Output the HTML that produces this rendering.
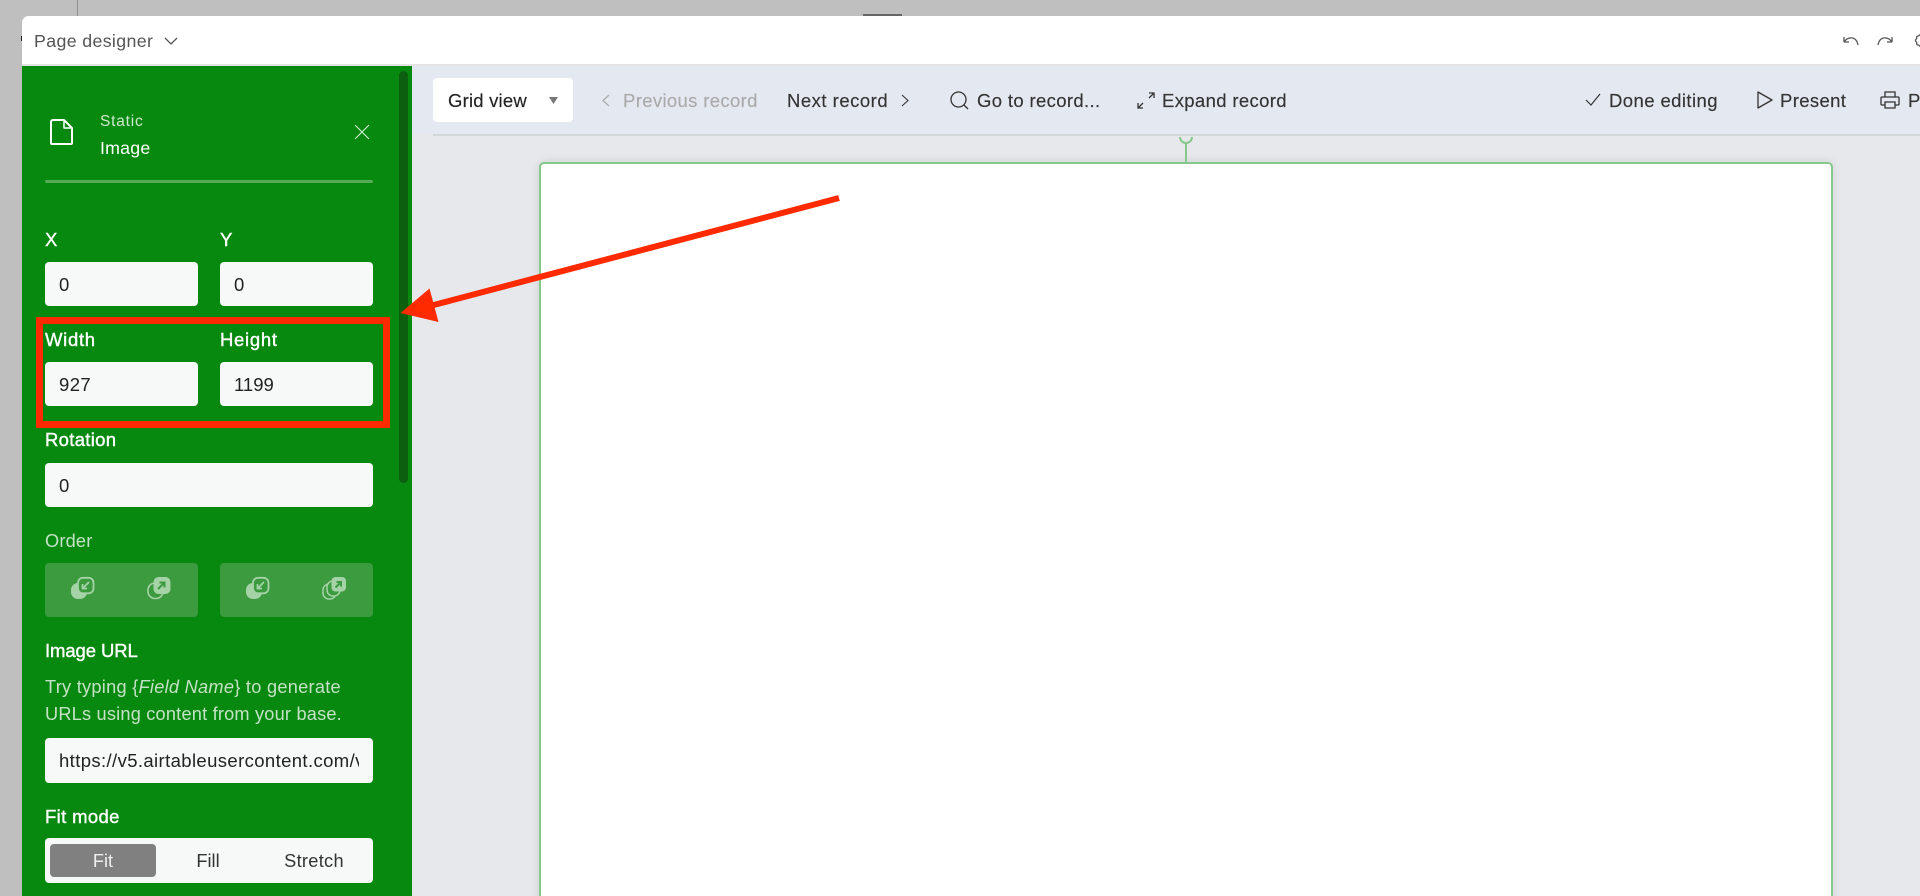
<!DOCTYPE html>
<html><head><meta charset="utf-8">
<style>
html,body{margin:0;padding:0;width:1920px;height:896px;overflow:hidden;background:#bfbfbf;font-family:"Liberation Sans",sans-serif}
#root{position:relative;width:1920px;height:896px;overflow:hidden;background:#bfbfbf}
.a{position:absolute}
.t{position:absolute;white-space:nowrap;line-height:24px;height:24px;font-size:18px}
.lb{color:#fff;-webkit-text-stroke:.4px #fff;font-size:18.500px;letter-spacing:.2px}
.in{position:absolute;background:#f7f8f8;border-radius:4px;height:44.500px;color:#222;font-size:18.500px;line-height:45px;text-indent:14px;overflow:hidden;white-space:nowrap}
.bar{color:#333;font-size:18.500px;letter-spacing:.35px;-webkit-text-stroke:.15px currentColor}
.h{color:#c4e2c6;font-size:18.200px;letter-spacing:.2px}
svg{position:absolute;overflow:visible}
</style></head><body><div id="root">
<div class="a" style="left:77px;top:0;width:1px;height:16px;background:#8f8f8f"></div>
<div class="a" style="left:863px;top:14px;width:39px;height:2px;background:#666"></div>
<div class="a" style="left:21px;top:36px;width:2px;height:5px;background:#222"></div>
<div class="a" style="left:22px;top:16px;width:1898px;height:880px;background:#e6e8ec;border-radius:7px 0 0 0"></div>
<div class="a" style="left:22px;top:16px;width:1898px;height:48px;background:#fff;border-radius:7px 0 0 0"></div>
<div class="a" style="left:22px;top:64px;width:1898px;height:2px;background:#e4e4e4"></div>
<div class="t" style="left:34px;top:29px;color:#555;font-size:17.800px;letter-spacing:.35px">Page designer</div>
<svg style="left:164px;top:36px" width="14" height="10" fill="none" stroke="#555" stroke-width="1.300"><path d="M1 2l6 6 6-6"/></svg>
<svg style="left:1843px;top:35px" width="16" height="11" fill="none" stroke="#555" stroke-width="1.300"><path d="M1 7V2M1 7H6M1 7C4 2 13 0 15 10"/></svg>
<svg style="left:1877px;top:35px" width="16" height="11" fill="none" stroke="#555" stroke-width="1.300"><path d="M15 7V2M15 7H10M15 7C12 2 3 0 1 10"/></svg>
<svg style="left:1915px;top:33px" width="10" height="15" fill="none" stroke="#555" stroke-width="1.300"><path d="M7 1C5 0 5 3 3 3C1 3 2 5 1.500 6C0 7 0 8 1.500 9C2 10 1 12 3 12C5 12 5 15 7 14"/></svg>

<!-- toolbar -->
<div class="a" style="left:412px;top:66px;width:1508px;height:68px;background:#e4e8f1"></div>
<div class="a" style="left:433px;top:134px;width:1487px;height:2px;background:#d3d7d9"></div>
<div class="a" style="left:433px;top:78px;width:140px;height:44px;background:#fff;border-radius:4px"></div>
<div class="t bar" style="left:448px;top:89px;color:#222;letter-spacing:.2px">Grid view</div>
<svg style="left:549px;top:97px" width="9" height="7"><path d="M0 0h9L4.500 7z" fill="#777"/></svg>
<svg style="left:602px;top:94px" width="8" height="13" fill="none" stroke="#aaa" stroke-width="1.200"><path d="M7 1L1 6.500 7 12"/></svg>
<div class="t bar" style="left:623px;top:89px;color:#aaa">Previous record</div>
<div class="t bar" style="left:787px;top:89px;letter-spacing:.5px">Next record</div>
<svg style="left:901px;top:94px" width="8" height="13" fill="none" stroke="#333" stroke-width="1.100"><path d="M1 1l6 5.500L1 12"/></svg>
<svg style="left:950px;top:91px" width="19" height="19" fill="none" stroke="#333" stroke-width="1.300"><circle cx="8.500" cy="8.500" r="7.500"/><path d="M14 14l4 4"/></svg>
<div class="t bar" style="left:977px;top:89px;">Go to record...</div>
<svg style="left:1137px;top:92px" width="18" height="17" fill="none" stroke="#333" stroke-width="1.300"><path d="M1 16l5-5M1 11v5h5M17 1l-5 5M12 1h5v5"/></svg>
<div class="t bar" style="left:1162px;top:89px;">Expand record</div>
<svg style="left:1585px;top:93px" width="16" height="14" fill="none" stroke="#333" stroke-width="1.200"><path d="M1 7l5 5L15 1"/></svg>
<div class="t bar" style="left:1609px;top:89px;letter-spacing:.42px">Done editing</div>
<svg style="left:1757px;top:91px" width="16" height="18" fill="none" stroke="#333" stroke-width="1.300" stroke-linejoin="round"><path d="M1 1v16l14-8z"/></svg>
<div class="t bar" style="left:1780px;top:89px;">Present</div>
<svg style="left:1880px;top:91px" width="20" height="18" fill="none" stroke="#333" stroke-width="1.300"><path d="M5 6V1h10v5M5 14H2a1 1 0 0 1-1-1V7a1 1 0 0 1 1-1h16a1 1 0 0 1 1 1v6a1 1 0 0 1-1 1h-3M5 11h10v6H5z"/></svg>
<div class="t bar" style="left:1908px;top:89px;">Print</div>

<!-- page -->
<div class="a" style="left:539px;top:162px;width:1290px;height:760px;background:#fff;border:2px solid #85c88b;border-radius:5px;box-shadow:0 0 10px rgba(0,0,0,.1)"></div>
<div class="a" style="left:1185px;top:143px;width:2px;height:19px;background:#85c88b"></div>
<svg style="left:1179px;top:136px" width="14" height="10" fill="none" stroke="#85c88b" stroke-width="2"><path d="M1 1a6 6 0 0 0 12 0"/></svg>

<!-- panel -->
<div class="a" style="left:22px;top:66px;width:389.500px;height:830px;background:#07880e"></div>
<div class="a" style="left:399px;top:71px;width:9px;height:412px;background:#0b5f0e;border-radius:5px"></div>
<svg style="left:50px;top:119px" width="23" height="27" fill="none" stroke="#fff" stroke-width="2" stroke-linejoin="round"><path d="M14 1H3a2 2 0 0 0-2 2v21a1 1 0 0 0 1 1h19a1 1 0 0 0 1-1V9z"/><path d="M14 1v8h8" stroke-width="1.500"/></svg>
<div class="t" style="left:100px;top:109.500px;color:#cfe8d0;font-size:15.500px;letter-spacing:.8px">Static</div>
<div class="t" style="left:100px;top:135.500px;color:#fff;font-size:17.800px;letter-spacing:.2px">Image</div>
<svg style="left:354px;top:124px" width="16" height="16" fill="none" stroke="#d6ecd7" stroke-width="1.100"><path d="M1 1l14 14M15 1L1 15"/></svg>
<div class="a" style="left:45px;top:180px;width:328px;height:3px;background:#55ab58;border-radius:2px"></div>

<div class="t lb" style="left:45px;top:228px">X</div>
<div class="t lb" style="left:220px;top:228px">Y</div>
<div class="in" style="left:45px;top:261.500px;width:152.500px">0</div>
<div class="in" style="left:220px;top:261.500px;width:153px">0</div>
<div class="t lb" style="left:45px;top:328px;letter-spacing:.7px">Width</div>
<div class="t lb" style="left:220px;top:328px;letter-spacing:.7px">Height</div>
<div class="in" style="left:45px;top:361.500px;width:152.500px;letter-spacing:.4px">927</div>
<div class="in" style="left:220px;top:361.500px;width:153px">1199</div>
<div class="t lb" style="left:45px;top:428px;letter-spacing:.3px">Rotation</div>
<div class="in" style="left:45px;top:462.500px;width:328px">0</div>
<div class="t h" style="left:45px;top:529px">Order</div>
<div class="a" style="left:45px;top:563px;width:152.500px;height:54px;background:#3c9a3f;border-radius:4px"></div>
<div class="a" style="left:220px;top:563px;width:153px;height:54px;background:#3c9a3f;border-radius:4px"></div>
<svg style="left:71px;top:577px" width="24" height="23"><rect x="0" y="6" width="16" height="16" rx="7" fill="#a5d3a7"/><rect x="7" y="0.800" width="15.500" height="15.500" rx="5" fill="#3c9a3f" stroke="#a5d3a7" stroke-width="1.800"/><path d="M18 5l-6 6M11.500 7v4.500H16" stroke="#a5d3a7" stroke-width="1.800" fill="none"/></svg>
<svg style="left:147px;top:577px" width="24" height="23"><rect x="1" y="6" width="15" height="15.500" rx="7" fill="#3c9a3f" stroke="#a5d3a7" stroke-width="1.600"/><rect x="6.500" y="0" width="17" height="17" rx="5" fill="#a5d3a7"/><path d="M11 12l6-6M12.500 5.500H17.500V10.500" stroke="#3c9a3f" stroke-width="2" fill="none"/></svg>
<svg style="left:246px;top:577px" width="24" height="23"><rect x="0" y="6" width="16" height="16" rx="7" fill="#a5d3a7"/><rect x="7" y="0.800" width="15.500" height="15.500" rx="5" fill="#3c9a3f" stroke="#a5d3a7" stroke-width="1.800"/><path d="M18 5l-6 6M11.500 7v4.500H16" stroke="#a5d3a7" stroke-width="1.800" fill="none"/></svg>
<svg style="left:322px;top:577px" width="24" height="23"><rect x="1" y="7" width="13" height="15" rx="6" fill="none" stroke="#a5d3a7" stroke-width="1.500"/><rect x="5" y="4" width="13" height="15" rx="6" fill="#3c9a3f" stroke="#a5d3a7" stroke-width="1.500"/><rect x="9.500" y="0" width="14.500" height="14.500" rx="4" fill="#a5d3a7"/><path d="M13.500 10.500l5-5M14.500 5H19V9.500" stroke="#3c9a3f" stroke-width="2" fill="none"/></svg>

<div class="t lb" style="left:45px;top:639px;letter-spacing:-.1px">Image URL</div>
<div class="t h" style="left:45px;top:675px;letter-spacing:.27px">Try typing {<i>Field Name</i>} to generate</div>
<div class="t h" style="left:45px;top:702px">URLs using content from your base.</div>
<div class="in" style="left:45px;top:738px;width:328px"></div>
<div class="t" style="left:59px;top:749px;width:300px;overflow:hidden;color:#222;font-size:18.500px;letter-spacing:.38px">https://v5.airtableusercontent.com/v3/abc</div>
<div class="t lb" style="left:45px;top:805px;letter-spacing:.35px">Fit mode</div>
<div class="in" style="left:45px;top:838px;width:328px"></div>
<div class="a" style="left:50px;top:843.500px;width:106px;height:33.500px;background:#808080;border-radius:4px"></div>
<div class="t" style="left:50px;top:849px;width:106px;text-align:center;color:#eee;font-size:18.200px">Fit</div>
<div class="t" style="left:155px;top:849px;width:106px;text-align:center;color:#333;font-size:18.200px">Fill</div>
<div class="t" style="left:261px;top:849px;width:106px;text-align:center;color:#333;font-size:18.200px;letter-spacing:.3px">Stretch</div>

<!-- annotations -->
<div class="a" style="left:35.500px;top:317px;width:354px;height:111px;box-sizing:border-box;border:7px solid #ff2a00"></div>
<svg style="left:0;top:0" width="1920" height="896"><path d="M839 198L430 306" stroke="#ff2a00" stroke-width="6" fill="none"/><path d="M400.500 313L429.500 288.500 438.500 322z" fill="#ff2a00"/></svg>
</div></body></html>
